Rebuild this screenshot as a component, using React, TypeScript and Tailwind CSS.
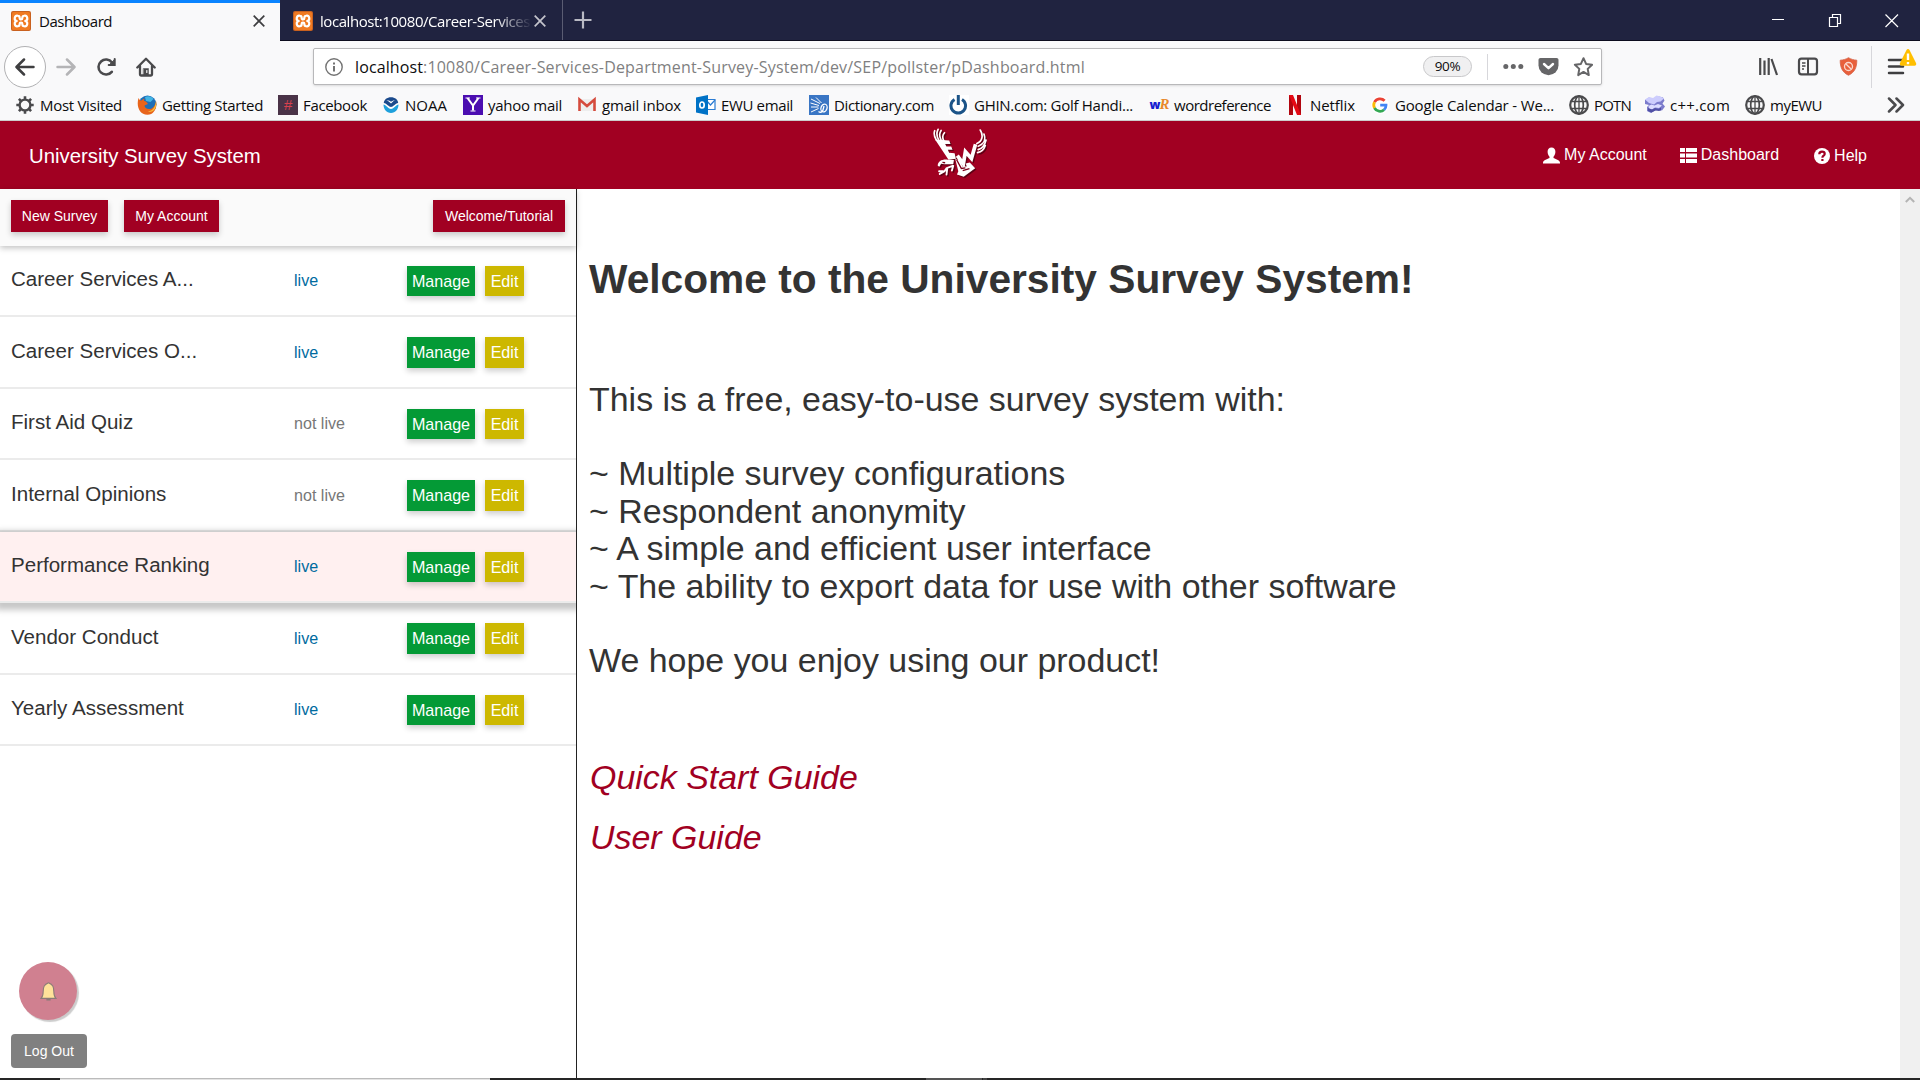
import { useLayoutEffect, useRef, useState, type ReactNode } from "react";

/** Single-line label whose tracking is adjusted so it spans a given width. */
function Fit({ text, w, className = "" }: { text: string; w: number; className?: string }) {
  const ref = useRef<HTMLSpanElement>(null);
  const [ls, setLs] = useState(0);
  useLayoutEffect(() => {
    const el = ref.current;
    if (!el) return;
    const natural = el.getBoundingClientRect().width - ls * text.length;
    setLs((w - natural) / text.length);
  }, [text, w]);
  return (
    <span ref={ref} className={`inline-block whitespace-pre ${className}`} style={{ letterSpacing: `${ls}px` }}>
      {text}
    </span>
  );
}

const Xampp = () => (
  <svg viewBox="0 0 20 20" className="size-5 shrink-0">
    <rect width="20" height="20" rx="2" fill="#c9611f" />
    <rect x="1" y="1" width="18" height="18" rx="1.500" fill="#f07a22" />
    <path
      d="M7 4.800a2.600 2.600 0 0 0-1.200 5.200A2.600 2.600 0 0 0 7 15.200c1.500 0 1.700-1 1.700-2.500s2.600-1.500 2.600 0 .2 2.500 1.700 2.500a2.600 2.600 0 0 0 1.200-5.200A2.600 2.600 0 0 0 13 4.800c-1.500 0-1.700 1-1.700 2.500s-2.600 1.500-2.600 0-.2-2.500-1.700-2.500z"
      fill="none"
      stroke="#fff"
      strokeWidth="2.200"
      strokeLinejoin="round"
    />
  </svg>
);

const Globe = () => (
  <svg viewBox="0 0 20 20" className="size-5" fill="none" stroke="#4a4a4c" strokeWidth="1.700">
    <circle cx="10" cy="10" r="8.800" strokeWidth="2.200" />
    <ellipse cx="10" cy="10" rx="4.300" ry="8.800" />
    <path d="M2.500 6.500h15M2.500 13.500h15M10 1v18" strokeWidth="1.300" />
  </svg>
);

const bookmarks: { label: string; w: number; cell: string; icon: ReactNode }[] = [
  {
    label: "Most Visited", w: 82, cell: "w-[122px]",
    icon: (
      <svg viewBox="0 0 20 20" className="size-5" fill="none" stroke="#4a4a4c">
        <circle cx="10" cy="10" r="5.400" strokeWidth="2.400" />
        <g strokeWidth="2.600">
          <path d="M10 1.300v3M10 15.700v3M1.300 10h3M15.700 10h3M3.900 3.900 6 6M14 14l2.100 2.100M3.900 16.100 6 14M14 6l2.100-2.100" />
        </g>
      </svg>
    ),
  },
  {
    label: "Getting Started", w: 101, cell: "w-[141px]",
    icon: (
      <svg viewBox="0 0 20 20" className="size-5">
        <circle cx="10.500" cy="9.500" r="9" fill="#1d6fb8" />
        <path d="M8 2c3-1.500 7-.5 8.500 2L13.500 7 9 6z" fill="#43b5e4" />
        <path d="M1.500 3C-.8 11 2 19.800 10.500 19.800 17 19.500 20.500 13 19 6c-.6 4-2.500 7.500-6 8-3.500.3-5.500-1.500-5.500-3.500l3.500-1.500C9.500 6.500 8 6 7 6c0-1.500.5-2.500.5-2.500C6 4 5 5 4.500 5.500c-1.200 0-2-.5-3-2.500z" fill="#e8641b" />
        <path d="M19 6C18.500 12 16 16 11 16.300c3 1.500 6.500-.5 7.500-3.500.8-2 1-4.300.5-6.800z" fill="#f9c23c" />
      </svg>
    ),
  },
  {
    label: "Facebook", w: 64, cell: "w-[102px]",
    icon: <span className="flex size-5 items-center justify-center bg-[#4a3347] font-['Liberation_Sans'] text-[15px] leading-none text-[#d9414e] italic">#</span>,
  },
  {
    label: "NOAA", w: 42, cell: "w-[83px]",
    icon: (
      <svg viewBox="0 0 20 20" className="size-5">
        <circle cx="11" cy="10" r="7.500" fill="#fff" />
        <path d="M3.800 8C4 4.500 7 2.200 11 2.200S18 4.500 18.200 8c-3 .5-5 4-7.200 4S6.800 8.500 3.800 8z" fill="#1b4a8c" />
        <path d="M3.500 9.500c2.500 0 4.500 4.500 7.500 4.500s5-4.500 7.500-4.500C18.500 14 15.500 18 11 18s-7.500-4-7.500-8.500z" fill="#1ea0dc" />
        <path d="M6.500 5.500c2 0 3 2 4.500 3 1.500-1.500 2.500-3 4.500-3.500-2 .3-3.500 1-4.500 1.800C10 6 8.500 5 6.500 5.500z" fill="#fff" />
      </svg>
    ),
  },
  {
    label: "yahoo mail", w: 74, cell: "w-[114px]",
    icon: (
      <svg viewBox="0 0 20 20" className="size-5">
        <rect width="20" height="20" fill="#4b0db0" />
        <path d="M4.500 3 10 10.500 15.500 3M10 10v5.500" stroke="#fff" strokeWidth="2" fill="none" />
        <path d="M2.500 3h4.500M13 3h4.500M7.500 16h5" stroke="#fff" strokeWidth="1.200" />
      </svg>
    ),
  },
  {
    label: "gmail inbox", w: 79, cell: "w-[119px]",
    icon: (
      <svg viewBox="0 0 20 20" className="size-5">
        <path d="M2 4h16v12H2z" fill="#eee" />
        <path d="M2.500 16V4.500L10 11l7.500-6.500V16" fill="none" stroke="#d54b3d" strokeWidth="2.600" />
      </svg>
    ),
  },
  {
    label: "EWU email", w: 72, cell: "w-[113px]",
    icon: (
      <svg viewBox="0 0 20 20" className="size-5">
        <path d="M9 4.500h10v10H9z" fill="#fff" stroke="#2b7cd3" strokeWidth="1.200" />
        <path d="m10 5 4.500 5L19 5" fill="none" stroke="#2b7cd3" strokeWidth="1.200" />
        <path d="M0 2.500 12 0v20L0 17.500z" fill="#0072c6" />
        <ellipse cx="6" cy="10" rx="2.200" ry="3" fill="none" stroke="#fff" strokeWidth="1.700" />
      </svg>
    ),
  },
  {
    label: "Dictionary.com", w: 100, cell: "w-[140px]",
    icon: (
      <svg viewBox="0 0 20 20" className="size-5" fill="none" stroke="#fff">
        <rect width="20" height="20" fill="#3a76c4" stroke="none" />
        <path d="M2 4 11 8.500M7 2.500 12.500 8M1.500 8 10 10.500M2 12l7.500 0M2 17l7.500-3.500" strokeWidth="1" />
        <ellipse cx="15" cy="13" rx="3" ry="4" strokeWidth="1.300" transform="rotate(20 15 13)" />
        <path d="M9.500 16.500c2 1.500 4 .5 4.500-1.500l1-4" strokeWidth="1.300" />
      </svg>
    ),
  },
  {
    label: "GHIN.com: Golf Handi...", w: 159, cell: "w-[200px]",
    icon: (
      <svg viewBox="0 0 20 20" className="size-5">
        <rect width="20" height="20" fill="#fff" />
        <path d="M5.500 4.500a7.300 7.300 0 1 0 7.500 0" fill="none" stroke="#1c5488" strokeWidth="3" />
        <path d="M9.300 0v10" stroke="#1c5488" strokeWidth="3" />
      </svg>
    ),
  },
  {
    label: "wordreference", w: 97, cell: "w-[136px]",
    icon: (
      <span className="flex h-5 items-center font-['Open_Sans'] text-[12px] leading-none font-extrabold tracking-[-1px]">
        <span className="text-[#1720d0]">w</span>
        <span className="font-['Liberation_Serif'] text-[15px] text-[#e8892b] italic">R</span>
      </span>
    ),
  },
  {
    label: "Netflix", w: 45, cell: "w-[85px]",
    icon: (
      <svg viewBox="0 0 20 20" className="size-5">
        <path d="M4 0h4v20H4zM12 0h4v20h-4z" fill="#b1060f" />
        <path d="M4 0h4l8 20h-4z" fill="#e50914" />
      </svg>
    ),
  },
  {
    label: "Google Calendar - We...", w: 159, cell: "w-[199px]",
    icon: (
      <svg viewBox="0 0 20 20" className="size-5" fill="none" strokeWidth="2.800">
        <circle cx="10" cy="10" r="9" fill="#fff" />
        <path d="M14.600 5.800A6.200 6.200 0 0 0 4.500 7.200" stroke="#ea4335" />
        <path d="M4.500 7.200a6.200 6.200 0 0 0 0 5.800" stroke="#fbbc05" />
        <path d="M4.500 13a6.200 6.200 0 0 0 9.600 1.700" stroke="#34a853" />
        <path d="M14.100 14.700A6 6 0 0 0 16 10.200H10.200" stroke="#4285f4" />
      </svg>
    ),
  },
  { label: "POTN", w: 37, cell: "w-[76px]", icon: <Globe /> },
  {
    label: "c++.com", w: 60, cell: "w-[100px]",
    icon: (
      <svg viewBox="0 0 20 20" className="size-5">
        <path d="M0 5l4-2.500 5 1.500 3-3 6 1.500 1.500 3-2 3 2.500 3-3 4-4-1-3 1-4 2.500-4-2v-4l2-2-4-1z" fill="#7c7ccc" />
        <path d="M0 4.500l4-2.500 4 1 3.500-2.500 4 1L19 3.500l-3.500 3L12 7 9 9.500 4 8z" fill="#cdcdfd" />
        <path d="M3.500 11l3-1.500 3 1L13 9l4 1.500-3 2.500-4-.5-3 2-3-1z" fill="#dcdcff" />
        <path d="M3 13l4 1.500 3-1.500 3.500 1 2.500-1.500v3l-2 .5-3.500-.5-4 2-3.500-1.500z" fill="#5050a4" />
      </svg>
    ),
  },
  { label: "myEWU", w: 52, cell: "w-[90px]", icon: <Globe /> },
];

const surveys = [
  { name: "Career Services A...", live: true },
  { name: "Career Services O...", live: true },
  { name: "First Aid Quiz", live: false },
  { name: "Internal Opinions", live: false },
  { name: "Performance Ranking", live: true, active: true },
  { name: "Vendor Conduct", live: true },
  { name: "Yearly Assessment", live: true },
];

function TabStrip() {
  return (
    <div className="flex h-[41px] border-b border-[#0c0c1e] bg-[#202340] text-[15px]">
      <div className="-mb-px flex h-[41px] w-[280px] items-center border-t-[3px] border-[#0a84ff] bg-[#f9f9fa] pb-0.5 pl-[11px]">
        <Xampp />
        <Fit text="Dashboard" w={73} className="ml-2 text-[#0c0c0d]" />
        <svg viewBox="0 0 12 12" className="ml-auto mr-[15px] size-3" stroke="#3e3e40" strokeWidth="1.700">
          <path d="m.7.7 10.600 10.600M11.300.7.7 11.300" />
        </svg>
      </div>
      <div className="flex w-[283px] items-center border-r border-[#5a5c72] pt-0.5 pl-[13px] text-white">
        <Xampp />
        <div className="ml-[7px] w-[210px] [mask-image:linear-gradient(to_right,black_175px,transparent_212px)]">
          <Fit text="localhost:10080/Career-Services" w={210} />
        </div>
        <svg viewBox="0 0 12 12" className="ml-1 size-3" stroke="#c4c4cc" strokeWidth="1.700">
          <path d="m.7.7 10.600 10.600M11.300.7.7 11.300" />
        </svg>
      </div>
      <svg viewBox="0 0 18 18" className="mt-[11px] ml-[11px] size-[18px]" stroke="#b9bac4" strokeWidth="2.200">
        <path d="M9 .5v17M.5 9h17" />
      </svg>
      <svg viewBox="0 0 148 40" className="mr-[10px] ml-auto h-10 w-[148px]" fill="none" stroke="#fff" strokeWidth="1.200">
        <path d="M10 19.500h12M67.500 17.500h8v9h-8zM70.500 17.500v-3h8v9h-3M123.500 14.500l12.500 12.500M136 14.500 123.500 27" />
      </svg>
    </div>
  );
}

function NavBar() {
  return (
    <div className="flex h-[50px] items-center pt-px pl-1">
      <div className="flex size-[42px] items-center justify-center rounded-full border border-[#b1b1b3] bg-white">
        <svg viewBox="0 0 20 18" className="h-[18px] w-5" fill="none" stroke="#3e3e40" strokeWidth="2.500" strokeLinecap="round" strokeLinejoin="round">
          <path d="M18.500 9H2M9 1.500 1.500 9 9 16.500" />
        </svg>
      </div>
      <svg viewBox="0 0 20 18" className="ml-[10px] h-[18px] w-5" fill="none" stroke="#b4b4b6" strokeWidth="2.500" strokeLinecap="round" strokeLinejoin="round">
        <path d="M1.500 9H18M11 1.500 18.500 9 11 16.500" />
      </svg>
      <svg viewBox="0 0 20 20" className="ml-5 size-5" fill="none" stroke="#4a4a4c" strokeWidth="2.600" strokeLinecap="round">
        <path d="M15.800 14.800A7.500 7.500 0 1 1 16 5.500" />
        <path d="M18.700 2v6h-6" strokeWidth="2" />
        <path d="M18.500 3v5h-5z" fill="#4a4a4c" strokeWidth="1" />
      </svg>
      <svg viewBox="0 0 20 20" className="ml-5 size-5" fill="none" stroke="#4a4a4c" strokeWidth="2.300" strokeLinecap="round" strokeLinejoin="round">
        <path d="M1.300 10.500 10 1.800l8.700 8.700M4 9v8.500c0 .6.400 1 1 1h10c.6 0 1-.4 1-1V9" />
        <path d="M7.500 11.500h5v6.500h-5z" fill="#4a4a4c" strokeWidth=".5" />
        <path d="M10.800 13.500v2" stroke="#f9f9fa" strokeWidth="1.200" />
      </svg>
      <div className="ml-[157px] flex h-[37px] w-[1289px] items-center rounded-[2px] border border-[#b8b8ba] bg-white pl-[11px] shadow-sm">
        <svg viewBox="0 0 18 18" className="size-[18px]" fill="none" stroke="#737373">
          <circle cx="9" cy="9" r="8.200" strokeWidth="1.400" />
          <path d="M9 8v5.500M9 4.500v2" strokeWidth="2" />
        </svg>
        <div className="ml-[12px] flex text-[16px]">
          <Fit text="localhost" w={68} className="text-[#0c0c0d]" />
          <Fit text=":10080/Career-Services-Department-Survey-System/dev/SEP/pollster/pDashboard.html" w={662} className="text-[#7f7f81]" />
        </div>
        <div className="ml-auto flex h-[21px] w-[49px] items-center justify-center rounded-full border border-[#c8c8ca] bg-[#f0f0f1] text-[13.500px] tracking-[-0.300px] text-[#0c0c0d]">
          90%
        </div>
        <div className="ml-[15px] h-[26px] w-px bg-[#d7d7db]" />
        <svg viewBox="0 0 90 20" className="ml-[15px] mr-2 h-5 w-[90px]" fill="none" stroke="#666668">
          <g fill="#666668" stroke="none">
            <circle cx="2.800" cy="9.500" r="2.500" />
            <circle cx="10.300" cy="9.500" r="2.500" />
            <circle cx="17.800" cy="9.500" r="2.500" />
            <path d="M37.500 1h16c1.200 0 2 .8 2 2v5.500a10 9.700 0 0 1-20 0V3c0-1.200.8-2 2-2z" />
          </g>
          <path d="m41 7 4.500 4.200L50 7" stroke="#fff" strokeWidth="2.400" strokeLinecap="round" strokeLinejoin="round" />
          <path d="m80.500 1.200 2.600 5.700 6 .8-4.400 4.200 1.100 6.200-5.300-3.200-5.300 3.200 1.100-6.200L71.900 7.700l6-.8z" strokeWidth="2" strokeLinejoin="round" />
        </svg>
      </div>
      <svg viewBox="0 0 100 20" className="ml-[156px] h-5 w-[100px]" fill="none" stroke="#4a4a4c">
        <path d="M2.200 1v17M6.500 3.500V18M10.700 1v17M13.500 2l5.500 16" strokeWidth="2.200" />
        <rect x="41" y="1.700" width="18" height="15.600" rx="2.500" strokeWidth="2.200" />
        <path d="M50 1.500v16" strokeWidth="2" />
        <path d="M44 6h3.500M44 9h3.500M44 12h2" strokeWidth="1.300" />
        <path d="M90.500 .7c2.500 1.500 5 2.200 8.300 2.500.2 7-2.300 12.300-8.300 15.100-6-2.800-8.500-8.100-8.300-15.100 3.300-.3 5.800-1 8.300-2.500z" fill="#e8603c" stroke="#d5644a" strokeWidth=".8" />
        <circle cx="90.500" cy="9.500" r="4" stroke="#fbd9cf" strokeWidth="1.300" />
        <path d="m87.700 6.700 5.600 5.600" stroke="#fbd9cf" strokeWidth="1.300" />
      </svg>
      <div className="ml-[13px] h-[42px] w-px bg-[#d7d7db]" />
      <svg viewBox="0 0 32 30" className="ml-[14px] h-[30px] w-8 overflow-visible">
        <path d="M3 8h14M3 14.500h14M3 21h14" stroke="#3e3e40" strokeWidth="2.500" strokeLinecap="round" />
        <path d="M20.500-2c.8-1.400 2.200-1.400 3 0l6.500 13c.7 1.500-.2 2.800-1.500 2.800h-13c-1.300 0-2.200-1.300-1.500-2.800z" fill="#ffbf00" />
        <path d="M22 1.500V8M22 10v2.300" stroke="#fff" strokeWidth="2.400" />
      </svg>
    </div>
  );
}

function BookmarksBar() {
  return (
    <div className="flex h-[30px] items-center border-b border-[#ccc] pb-0.5 pl-[15px] text-[15px] text-[#0c0c0d]">
      {bookmarks.map((b) => (
        <div key={b.label} className={`flex shrink-0 items-center ${b.cell}`}>
          <span className="flex w-5 shrink-0 justify-center">{b.icon}</span>
          <Fit text={b.label} w={b.w} className="ml-[5px] leading-5" />
        </div>
      ))}
      <svg viewBox="0 0 18 16" className="ml-auto mr-[15px] h-4 w-[18px]" fill="none" stroke="#4a4a4c" strokeWidth="2.500" strokeLinejoin="round" strokeLinecap="round">
        <path d="m2 1.500 6.500 6.500L2 14.500M9.500 1.500 16 8l-6.500 6.500" />
      </svg>
    </div>
  );
}

const EagleShape = () => (
  <g fill="none" stroke="currentColor" strokeWidth="5" strokeLinecap="round">
    <path d="M10 42C4 32 2 22 5 14M17 42C10 30 11 18 15 10M24 42C18 30 19 20 24 13M32 44C27 34 28 26 34 20" />
    <path d="M130 52C146 46 150 28 140 12M134 60C150 54 157 40 151 24M134 70C147 66 154 54 157 42M132 79C144 77 151 70 155 58" />
    <path d="M58 118 40 125l-6 9-14 8M42 128l-2 16M60 118l-4 14M30 134l-12 0" strokeWidth="5.500" />
    <path d="M72 88 90 112 96 76l18 20 12-42" strokeWidth="11" strokeLinecap="butt" />
    <g fill="currentColor" stroke="none">
      <path d="M6 40 48 43l4 10-16 0 4 8 14 0 4 9-14 0 4 9 16 2 4 16-22 3z" />
      <path d="M14 118c0-14 14-20 30-18l18 1-2 12H34l-10-1-5 9z" />
      <path d="M66 98l14 4 8 18 12 0-3-9 12-3 16 17-34 25-20-6 4-10z" />
    </g>
  </g>
);

function Eagle() {
  return (
    <svg viewBox="0 0 160 160" className="size-[54px]">
      <g transform="translate(4 4)" className="text-[#5e0014]">
        <EagleShape />
      </g>
      <g className="text-white">
        <EagleShape />
      </g>
      <path d="M70 100l14 26 12-2M88 132l20-6M28 108l8 1" stroke="#7a0019" strokeWidth="4" fill="none" />
    </svg>
  );
}

function SiteHeader() {
  return (
    <header className="grid h-[68px] grid-cols-3 items-center bg-[#a10022] text-white">
      <div className="pt-0.5 pl-[29px] text-[20.350px]">University Survey System</div>
      <div className="flex justify-center pb-1">
        <Eagle />
      </div>
      <nav className="flex justify-end pr-[53px] text-[16px] leading-6">
        <a className="flex items-center">
          <svg viewBox="0 0 17 16" className="mr-1 size-[17px]" fill="#fff">
            <path d="M8.500 0c2.500 0 3.900 1.700 3.900 4.300 0 2-.8 3.800-1.900 4.900v1.300c1.500 1 6.500 1.800 6.500 4.700V16H0v-.8c0-2.900 5-3.700 6.500-4.700V9.200C5.400 8.100 4.600 6.300 4.600 4.300 4.600 1.700 6 0 8.500 0z" />
          </svg>
          My Account
        </a>
        <a className="ml-[33px] flex items-center">
          <svg viewBox="0 0 17 15" className="mr-1 h-[15px] w-[17px]" fill="#fff">
            <path d="M0 0h5v4H0zM6 0h11v4H6zM0 5.500h5v4H0zM6 5.500h11v4H6zM0 11h5v4H0zM6 11h11v4H6z" />
          </svg>
          Dashboard
        </a>
        <a className="ml-[35px] flex items-center pt-0.5">
          <svg viewBox="0 0 16 16" className="mr-1 size-4">
            <circle cx="8" cy="8" r="8" fill="#fff" />
            <path d="M5.300 6.300C5.300 4.500 6.500 3.700 8 3.700s2.700.8 2.700 2.200c0 1.800-2.300 1.800-2.300 3.800M8.400 11v2" fill="none" stroke="#a10022" strokeWidth="2.200" />
          </svg>
          Help
        </a>
      </nav>
    </header>
  );
}

function Sidebar() {
  return (
    <aside className="flex w-[577px] flex-col border-r border-[#222]">
      <div className="relative z-10 flex h-[56.500px] shrink-0 items-start bg-[#fafafa] pt-[11px] pr-[11px] pl-[11px] text-[14px] text-white shadow-[0_2px_6px_rgba(0,0,0,0.25)]">
        <button className="h-8 w-[97px] bg-[#a10022] shadow-[0_3px_6px_rgba(0,0,0,0.2)]">New Survey</button>
        <button className="ml-4 h-8 w-[95px] bg-[#a10022] shadow-[0_3px_6px_rgba(0,0,0,0.2)]">My Account</button>
        <button className="ml-auto h-8 w-[132px] bg-[#a10022] shadow-[0_3px_6px_rgba(0,0,0,0.2)]">Welcome/Tutorial</button>
      </div>
      {surveys.map((s) => (
        <div
          key={s.name}
          className={`flex h-[71.500px] shrink-0 items-start border-b-2 border-[#ebebeb] pl-[11px] text-[16.100px] ${
            s.active ? "relative bg-[#fff0f0] shadow-[0_3px_6px_4px_rgba(0,0,0,0.22)] [clip-path:inset(-12px_0_-16px_0)]" : ""
          }`}
        >
          <div className="mt-[21.500px] w-[283px] text-[20.550px] leading-6 text-[#333]">{s.name}</div>
          <div className={`mt-[22.500px] w-[113px] leading-6 ${s.live ? "text-[#006b9f]" : "text-[#777]"}`}>{s.live ? "live" : "not live"}</div>
          <button className="mt-[20px] h-[30.500px] w-[68px] bg-[#049a36] text-white shadow-[0_3px_6px_rgba(0,0,0,0.2)]">Manage</button>
          <button className="mt-[20px] ml-[10px] h-[30.500px] w-[39px] bg-[#cdb800] text-white shadow-[0_3px_6px_rgba(0,0,0,0.2)]">Edit</button>
        </div>
      ))}
      <div className="mt-auto mb-[10px] flex flex-col items-start pl-[11px]">
        <div className="ml-2 flex size-[58px] items-center justify-center rounded-full bg-[#d08090] pl-px shadow-[2px_2px_1px_rgba(0,0,0,0.2)]">
          <svg viewBox="0 0 16 18" className="h-[19px] w-[17px]" preserveAspectRatio="none">
            <path d="M8 .8C4 2.500 3 4.500 3 9c0 3-.5 5-2 6.500h14C13.500 14 13 12 13 9c0-4.500-1-6.500-5-8.200z" fill="#ffe29a" stroke="#8b7b78" strokeWidth="1" />
            <path d="M6 16.800h4" stroke="#8b7b78" strokeWidth="1.500" />
          </svg>
        </div>
        <button className="mt-[14px] h-[34px] w-[76px] rounded-[4px] bg-[#808080] text-[14px] text-white">Log Out</button>
      </div>
    </aside>
  );
}

function Welcome() {
  return (
    <main className="flex-1 pl-3 text-[33.950px] leading-[37.400px] text-[#333]">
      <h1 className="mt-[68px] text-[40.700px] leading-[45px] font-bold">Welcome to the University Survey System!</h1>
      <p className="mt-[79px]">This is a free, easy-to-use survey system with:</p>
      <ul className="mt-[37px]">
        <li>~ Multiple survey configurations</li>
        <li>~ Respondent anonymity</li>
        <li>~ A simple and efficient user interface</li>
        <li>~ The ability to export data for use with other software</li>
      </ul>
      <p className="mt-[37px]">We hope you enjoy using our product!</p>
      <div className="mt-[80px] flex flex-col items-start gap-[22.500px] pl-px text-[#a10022] italic">
        <a>Quick Start Guide</a>
        <a>User Guide</a>
      </div>
    </main>
  );
}

export default function App() {
  return (
    <div className="flex h-[1080px] w-[1920px] flex-col overflow-hidden bg-white">
      <div className="bg-[#f9f9fa] font-['Open_Sans',sans-serif]">
        <TabStrip />
        <NavBar />
        <BookmarksBar />
      </div>
      <div className="flex min-h-0 flex-1 flex-col font-['Liberation_Sans',Arial,sans-serif]">
        <SiteHeader />
        <div className="flex min-h-0 flex-1">
          <Sidebar />
          <Welcome />
          <div className="flex w-5 justify-center bg-[#f0f0f0] pt-[7px]">
            <svg viewBox="0 0 10 7" className="h-[7px] w-[10px]" fill="none" stroke="#b4b4b4" strokeWidth="2">
              <path d="m.8 6 4.200-4.200L9.200 6" />
            </svg>
          </div>
        </div>
      </div>
      <div className="flex h-0.5 bg-[#262626]">
        <div className="ml-[60px] w-[430px] border-t border-[#bbb] bg-[#e4e4e4]" />
        <div className="ml-[436px] w-14 bg-[#555]" />
        <div className="ml-px w-1 bg-[#444]" />
      </div>
    </div>
  );
}
